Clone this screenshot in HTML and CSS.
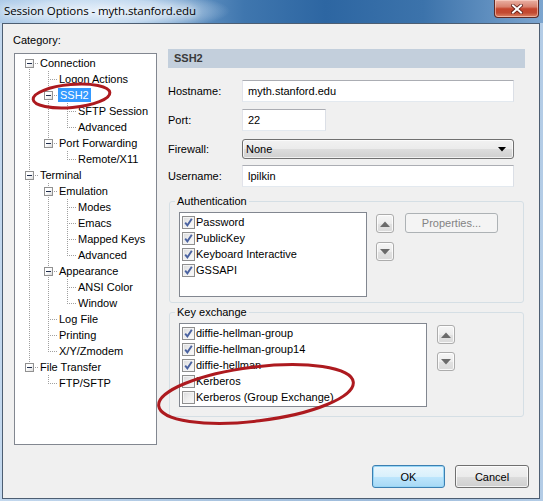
FILE: index.html
```html
<!DOCTYPE html>
<html>
<head>
<meta charset="utf-8">
<title>Session Options</title>
<link rel="stylesheet" href="styles.css">
</head>
<body>
<div class="window">
  <div class="titlebar">
    <span class="title">Session Options - myth.stanford.edu</span>
    <span class="close">
      <svg width="12" height="10" viewBox="0 0 12 10"><path d="M2 1.5 L10 8.5 M10 1.5 L2 8.5" stroke="#5a1a14" stroke-width="3.6" stroke-linecap="square" fill="none"/><path d="M2 1.5 L10 8.5 M10 1.5 L2 8.5" stroke="#ffffff" stroke-width="2" stroke-linecap="square" fill="none"/></svg>
    </span>
  </div>
  <div class="client">
    <div class="main">
      <div class="left">
        <div class="cat">Category:</div>
        <div class="tree">
          <div class="row"><i class="c R"><b class="box"></b></i><span class="lbl">Connection</span></div>
          <div class="row"><i class="c I"></i><i class="c T"></i><span class="lbl">Logon Actions</span></div>
          <div class="row"><i class="c I"></i><i class="c T"><b class="box"></b></i><span class="lbl sel">SSH2</span></div>
          <div class="row"><i class="c I"></i><i class="c I"></i><i class="c T"></i><span class="lbl">SFTP Session</span></div>
          <div class="row"><i class="c I"></i><i class="c I"></i><i class="c L"></i><span class="lbl">Advanced</span></div>
          <div class="row"><i class="c I"></i><i class="c L"><b class="box"></b></i><span class="lbl">Port Forwarding</span></div>
          <div class="row"><i class="c I"></i><i class="c"></i><i class="c L"></i><span class="lbl">Remote/X11</span></div>
          <div class="row"><i class="c T"><b class="box"></b></i><span class="lbl">Terminal</span></div>
          <div class="row"><i class="c I"></i><i class="c T"><b class="box"></b></i><span class="lbl">Emulation</span></div>
          <div class="row"><i class="c I"></i><i class="c I"></i><i class="c T"></i><span class="lbl">Modes</span></div>
          <div class="row"><i class="c I"></i><i class="c I"></i><i class="c T"></i><span class="lbl">Emacs</span></div>
          <div class="row"><i class="c I"></i><i class="c I"></i><i class="c T"></i><span class="lbl">Mapped Keys</span></div>
          <div class="row"><i class="c I"></i><i class="c I"></i><i class="c L"></i><span class="lbl">Advanced</span></div>
          <div class="row"><i class="c I"></i><i class="c T"><b class="box"></b></i><span class="lbl">Appearance</span></div>
          <div class="row"><i class="c I"></i><i class="c I"></i><i class="c T"></i><span class="lbl">ANSI Color</span></div>
          <div class="row"><i class="c I"></i><i class="c I"></i><i class="c L"></i><span class="lbl">Window</span></div>
          <div class="row"><i class="c I"></i><i class="c T"></i><span class="lbl">Log File</span></div>
          <div class="row"><i class="c I"></i><i class="c T"></i><span class="lbl">Printing</span></div>
          <div class="row"><i class="c I"></i><i class="c L"></i><span class="lbl">X/Y/Zmodem</span></div>
          <div class="row"><i class="c L"><b class="box"></b></i><span class="lbl">File Transfer</span></div>
          <div class="row"><i class="c"></i><i class="c L"></i><span class="lbl">FTP/SFTP</span></div>
        </div>
      </div>
      <div class="panel">
        <div class="header">SSH2</div>
        <div class="frow r1"><span class="flabel">Hostname:</span><span class="tb wide">myth.stanford.edu</span></div>
        <div class="frow r2"><span class="flabel">Port:</span><span class="tb port">22</span></div>
        <div class="frow r3"><span class="flabel">Firewall:</span><span class="select"><span>None</span><svg width="8" height="5" viewBox="0 0 8 5"><path d="M0 0 H8 L4 4.5 Z" fill="#000"/></svg></span></div>
        <div class="frow r4"><span class="flabel">Username:</span><span class="tb wide">lpilkin</span></div>

        <fieldset class="group auth">
          <legend>Authentication</legend>
          <div class="grow">
            <div class="list auth-list">
              <div class="lrow"><span class="cb on"><svg width="11" height="11" viewBox="0 0 11 11"><path d="M2.2 5.6 L4.4 8.4 L8.8 1.8" stroke="#4a62a0" stroke-width="1.9" fill="none"/></svg></span>Password</div>
              <div class="lrow"><span class="cb on"><svg width="11" height="11" viewBox="0 0 11 11"><path d="M2.2 5.6 L4.4 8.4 L8.8 1.8" stroke="#4a62a0" stroke-width="1.9" fill="none"/></svg></span>PublicKey</div>
              <div class="lrow"><span class="cb on"><svg width="11" height="11" viewBox="0 0 11 11"><path d="M2.2 5.6 L4.4 8.4 L8.8 1.8" stroke="#4a62a0" stroke-width="1.9" fill="none"/></svg></span>Keyboard Interactive</div>
              <div class="lrow"><span class="cb on"><svg width="11" height="11" viewBox="0 0 11 11"><path d="M2.2 5.6 L4.4 8.4 L8.8 1.8" stroke="#4a62a0" stroke-width="1.9" fill="none"/></svg></span>GSSAPI</div>
            </div>
            <div class="arrows a-auth">
              <span class="arr up"><svg width="10" height="6" viewBox="0 0 10 6"><path d="M0 6 L5 0.5 L10 6 Z" fill="#6a6a6a"/></svg></span>
              <span class="arr down"><svg width="10" height="6" viewBox="0 0 10 6"><path d="M0 0 L5 5.5 L10 0 Z" fill="#6a6a6a"/></svg></span>
            </div>
            <span class="btn props">Properties...</span>
          </div>
        </fieldset>

        <fieldset class="group kex">
          <legend>Key exchange</legend>
          <div class="grow">
            <div class="list kex-list">
              <div class="lrow"><span class="cb on"><svg width="11" height="11" viewBox="0 0 11 11"><path d="M2.2 5.6 L4.4 8.4 L8.8 1.8" stroke="#4a62a0" stroke-width="1.9" fill="none"/></svg></span>diffie-hellman-group</div>
              <div class="lrow"><span class="cb on"><svg width="11" height="11" viewBox="0 0 11 11"><path d="M2.2 5.6 L4.4 8.4 L8.8 1.8" stroke="#4a62a0" stroke-width="1.9" fill="none"/></svg></span>diffie-hellman-group14</div>
              <div class="lrow"><span class="cb on"><svg width="11" height="11" viewBox="0 0 11 11"><path d="M2.2 5.6 L4.4 8.4 L8.8 1.8" stroke="#4a62a0" stroke-width="1.9" fill="none"/></svg></span>diffie-hellman</div>
              <div class="lrow"><span class="cb"></span>Kerberos</div>
              <div class="lrow"><span class="cb"></span>Kerberos (Group Exchange)</div>
            </div>
            <div class="arrows a-kex">
              <span class="arr up"><svg width="10" height="6" viewBox="0 0 10 6"><path d="M0 6 L5 0.5 L10 6 Z" fill="#6a6a6a"/></svg></span>
              <span class="arr down"><svg width="10" height="6" viewBox="0 0 10 6"><path d="M0 0 L5 5.5 L10 0 Z" fill="#6a6a6a"/></svg></span>
            </div>
          </div>
        </fieldset>
      </div>
    </div>
    <div class="footer">
      <span class="btn ok">OK</span>
      <span class="btn cancel">Cancel</span>
    </div>
  </div>
  <svg class="marks" width="543" height="501" viewBox="0 0 543 501">
    <ellipse cx="71.5" cy="96" rx="38.5" ry="11.5" transform="rotate(-5 71.5 96)" fill="none" stroke="#ad1a1f" stroke-width="3"/>
    <ellipse cx="256" cy="394" rx="98" ry="27" transform="rotate(-7 256 394)" fill="none" stroke="#ad1a1f" stroke-width="3"/>
  </svg>
</div>
</body>
</html>
```
FILE: styles.css
```css
* { box-sizing: border-box; }
html, body { margin: 0; padding: 0; }
body {
  width: 543px; height: 501px; overflow: hidden;
  font-family: "Liberation Sans", Arial, sans-serif;
  font-size: 11px; color: #000;
}
.window {
  position: relative;
  width: 543px; height: 501px;
  display: flex; flex-direction: column;
  background: linear-gradient(to right, #c3d8ee 0%, #a9c4e0 40%, #9dbbdb 70%, #b3cce6 100%);
}
.titlebar {
  height: 23px; flex: none;
  display: flex; justify-content: space-between; align-items: flex-start;
  background:
    radial-gradient(ellipse 130px 22px at 100px 11px, rgba(236,244,252,0.95) 0%, rgba(214,231,247,0.8) 55%, rgba(214,231,247,0) 100%),
    linear-gradient(to right, #a6c6e6 0%, #6f9cc9 32%, #3f76ae 45%, #2d66a2 60%, #3c73ab 78%, #7ca5cf 100%);
}
.title {
  margin: 3px 0 0 4px;
  font-family: "Open Sans", "Noto Sans", sans-serif;
  font-size: 11.5px; line-height: 15px; color: #000;
  text-shadow: 0 0 6px #fff, 0 0 10px #fff;
  letter-spacing: -0.1px;
}
.close {
  width: 45px; height: 18px; margin-right: 4px;
  border: 1px solid #5e2a26; border-top: none;
  border-radius: 0 0 4px 4px;
  background: linear-gradient(#eab1a4 0%, #d9826f 40%, #c4452d 52%, #c24a32 75%, #dc8466 100%);
  box-shadow: inset 0 0 0 1px rgba(255,220,210,0.55);
  display: flex; align-items: center; justify-content: center;
}
.client {
  flex: 1;
  margin: 0 3px 2px 2px;
  border: 1px solid #4d5e72;
  background: #f0f0f0;
  display: flex; flex-direction: column;
}
.main { display: flex; align-items: flex-start; }
.left { margin-left: 10px; display: flex; flex-direction: column; }
.cat { margin-top: 10px; line-height: 13px; }
.tree {
  margin: 6px 0 0 1px;
  width: 143px; height: 392px;
  border: 1px solid #828790;
  background: #fff;
  padding: 1px 0 0 5px;
}
.row { display: flex; height: 16px; align-items: center; white-space: nowrap; }
.c {
  display: block; flex: none; width: 19px; height: 16px;
  background-repeat: no-repeat;
}
.c.I {
  background-image: repeating-linear-gradient(to bottom, #a0a0a0 0 1px, transparent 1px 2px);
  background-size: 1px 16px; background-position: 9px 0;
}
.c.T {
  background-image: repeating-linear-gradient(to bottom, #a0a0a0 0 1px, transparent 1px 2px),
                    repeating-linear-gradient(to right, #a0a0a0 0 1px, transparent 1px 2px);
  background-size: 1px 16px, 9px 1px;
  background-position: 9px 0, 9px 8px;
}
.c.L {
  background-image: repeating-linear-gradient(to bottom, #a0a0a0 0 1px, transparent 1px 2px),
                    repeating-linear-gradient(to right, #a0a0a0 0 1px, transparent 1px 2px);
  background-size: 1px 9px, 9px 1px;
  background-position: 9px 0, 9px 8px;
}
.c.R {
  background-image: repeating-linear-gradient(to bottom, #a0a0a0 0 1px, transparent 1px 2px),
                    repeating-linear-gradient(to right, #a0a0a0 0 1px, transparent 1px 2px);
  background-size: 1px 8px, 9px 1px;
  background-position: 9px 8px, 9px 8px;
}
.box {
  display: block; width: 9px; height: 9px; margin: 4px 0 0 5px;
  border: 1px solid #919191;
  background: linear-gradient(135deg, #ffffff 0%, #ffffff 40%, #dcdcdc 100%);
  position: relative;
}
.box::after {
  content: ""; display: block; width: 5px; height: 1px;
  margin: 3px 0 0 1px; background: #1f2d4c;
}
.lbl { padding: 0 1px; line-height: 14px; }
.lbl.sel { background: #3399ff; color: #fff; padding: 0 2px; }

.panel { margin: 25px 0 0 11px; width: 357px; display: flex; flex-direction: column; }
.header {
  height: 19px; line-height: 19px; padding-left: 6px;
  background: #c3cfdc; font-weight: bold; color: #3a3a3a;
}
.frow { display: flex; align-items: center; }
.flabel { width: 74px; flex: none; }
.r1 { margin-top: 12px; }
.r2 { margin-top: 7px; }
.r3 { margin-top: 8px; }
.r4 { margin-top: 6px; }
.tb {
  height: 22px; line-height: 20px; padding-left: 5px;
  background: #fff;
  border: 1px solid; border-color: #abadb3 #dbdfe6 #e3e9ef #e2e3ea;
}
.tb.wide { width: 272px; }
.tb.port { width: 84px; }
.select {
  width: 272px; height: 20px; padding: 0 7px 0 3px;
  border: 1px solid #707070; border-radius: 3px;
  background: linear-gradient(#f2f2f2 0%, #ebebeb 50%, #dddddd 51%, #cfcfcf 100%);
  box-shadow: inset 0 0 0 1px rgba(255,255,255,0.7);
  display: flex; align-items: center; justify-content: space-between;
}
.group {
  margin: 0 0 0 1px; width: 355px;
  border: 1px solid #d5dfe5; border-radius: 3px;
  padding: 4px 0 5px 9px;
  min-width: 0;
}
.group legend {
  padding: 0 2px; margin-left: -4px;
  line-height: 13px; font-size: 11px;
}
.auth { margin-top: 8px; }
.kex { margin-top: 3px; padding-bottom: 9px; }
.grow { display: flex; align-items: flex-start; }
.list {
  background: #fff; border: 1px solid #828790;
  padding: 1px 0 0 2px;
}
.auth-list { width: 188px; height: 85px; }
.kex-list { width: 248px; height: 84px; }
.lrow { height: 16px; display: flex; align-items: center; white-space: nowrap; }
.cb {
  flex: none; width: 13px; height: 13px; margin-right: 1px;
  border: 1px solid #8f8f8f;
  background: linear-gradient(135deg, #d9dadc 0%, #eeeeee 50%, #fbfbfb 100%);
  box-shadow: inset 0 0 0 1px #f4f4f4;
  display: flex; align-items: center; justify-content: center;
}
.arrows { display: flex; flex-direction: column; }
.a-auth { margin-left: 9px; }
.a-kex { margin-left: 10px; }
.arr {
  width: 18px; height: 19px;
  border: 1px solid #acacac; border-radius: 3px;
  background: linear-gradient(#f6f6f6 0%, #ececec 50%, #e2e2e2 51%, #dadada 100%);
  box-shadow: inset 0 0 0 1px rgba(255,255,255,0.8);
  display: flex; align-items: center; justify-content: center;
}
.arr.up { margin-top: 2px; }
.a-auth .arr.down { margin-top: 9px; }
.a-kex .arr.down { margin-top: 8px; }
.btn {
  display: flex; align-items: center; justify-content: center;
  border-radius: 3px;
}
.props {
  margin: 1px 0 0 11px; width: 93px; height: 20px;
  border: 1px solid #adb2b5; background: #f4f4f4; color: #838383;
}
.footer {
  margin-top: auto;
  display: flex; justify-content: flex-end;
  padding: 0 10px 10px 0;
}
.ok, .cancel {
  height: 23px;
  background: linear-gradient(#f2f2f2 0%, #ebebeb 50%, #dddddd 51%, #cfcfcf 100%);
  border: 1px solid #707070;
  box-shadow: inset 0 0 0 1px rgba(255,255,255,0.75);
}
.ok {
  width: 73px;
  border-color: #3c7fb1;
  background: linear-gradient(#eaf6fd 0%, #d9f0fc 50%, #bee6fd 51%, #a7d9f5 100%);
  box-shadow: inset 0 0 0 1px #98d6f6;
}
.cancel { width: 74px; margin-left: 10px; }
.marks { position: absolute; left: 0; top: 0; pointer-events: none; }
```
